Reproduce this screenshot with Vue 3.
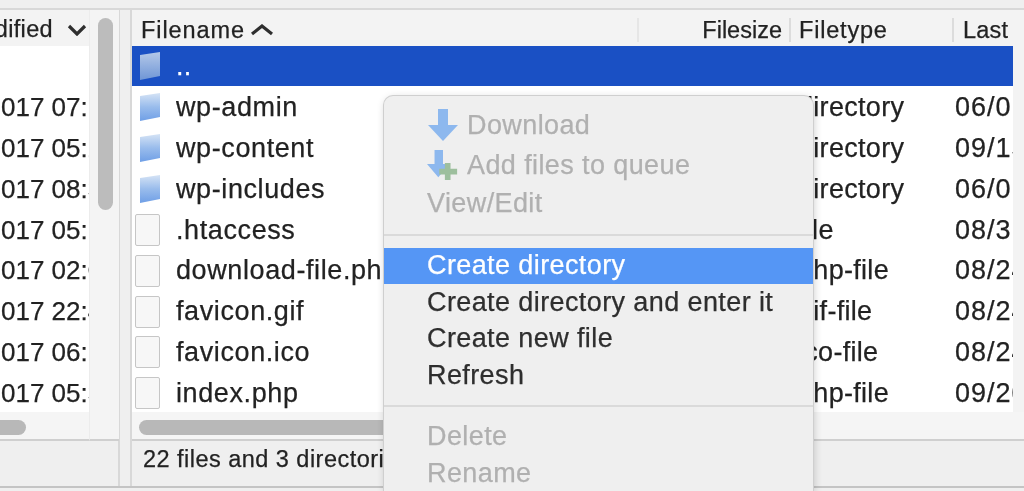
<script setup>
const leftRows = ['2017 07:14', '2017 05:22', '2017 08:31', '2017 05:10', '2017 02:09', '2017 22:41', '2017 06:18', '2017 05:33']
const rows = [
  { name: 'wp-admin', kind: 'dir', type: 'directory', date: '06/01/2017' },
  { name: 'wp-content', kind: 'dir', type: 'directory', date: '09/15/2017' },
  { name: 'wp-includes', kind: 'dir', type: 'directory', date: '06/01/2017' },
  { name: '.htaccess', kind: 'file', type: 'file', date: '08/31/2017' },
  { name: 'download-file.php', kind: 'file', type: 'php-file', date: '08/24/2017' },
  { name: 'favicon.gif', kind: 'file', type: 'gif-file', date: '08/24/2017' },
  { name: 'favicon.ico', kind: 'file', type: 'ico-file', date: '08/24/2017' },
  { name: 'index.php', kind: 'file', type: 'php-file', date: '09/20/2017' }
]
</script>

<template>
  <div class="app">
    <div class="top"></div>
    <div class="panes">
      <section class="pane left">
        <div class="left-top">
          <div class="left-main">
            <div class="head left-head">
              <span class="clip-head">Modified</span>
              <svg class="chev" width="20" height="12" viewBox="0 0 20 12"><path d="M2 2l8 8 8-8" fill="none" stroke="#2e2e2e" stroke-width="3.2"/></svg>
            </div>
            <div class="list">
              <div class="row first-row"></div>
              <div v-for="t in leftRows" :key="t" class="row left-row">{{ t }}</div>
            </div>
            <div class="hbar"><span class="thumb left-thumb"></span></div>
          </div>
          <div class="vtrack"><span class="vthumb"></span></div>
        </div>
        <div class="status"></div>
      </section>

      <section class="pane right">
        <div class="head right-head">
          <div class="hcell name-h">
            <span>Filename</span>
            <svg width="24" height="12" viewBox="0 0 24 12"><path d="M2 10l10-8 10 8" fill="none" stroke="#2e2e2e" stroke-width="3.2"/></svg>
          </div>
          <div class="hcell size-h">Filesize</div>
          <div class="hcell type-h">Filetype</div>
          <div class="hcell last-h">Last</div>
        </div>
        <div class="list">
          <div class="row file-row selected">
            <svg class="folder" width="26" height="32" viewBox="0 0 26 32">
              <defs>
                <linearGradient id="fs" x1="0" y1="0" x2="0" y2="1"><stop offset="0" stop-color="#b4c8e8"/><stop offset="1" stop-color="#6f96d6"/></linearGradient>
              </defs>
              <path d="M3 5l20-3v24l-20 4z" fill="url(#fs)"/>
            </svg>
            <span class="dots">..</span>
          </div>
          <div v-for="r in rows" :key="r.name" class="row file-row">
            <svg v-if="r.kind === 'dir'" class="folder" width="26" height="32" viewBox="0 0 26 32">
              <defs>
                <linearGradient id="fg" x1="0" y1="0" x2="0" y2="1"><stop offset="0" stop-color="#d5e3f5"/><stop offset="0.5" stop-color="#99bcec"/><stop offset="1" stop-color="#6f9fe6"/></linearGradient>
              </defs>
              <path d="M3 5l20-3v24l-20 4z" fill="url(#fg)"/>
            </svg>
            <span v-else class="doc"></span>
            <span class="name">{{ r.name }}</span>
            <span class="type">{{ r.type }}</span>
            <span class="date">{{ r.date }}</span>
          </div>
        </div>
        <div class="hbar"><span class="thumb right-thumb"></span></div>
        <div class="status"><span class="status-text">22 files and 3 directories</span></div>
      </section>
    </div>

    <div class="menu">
      <div class="item off with-icon">
        <svg width="32" height="34" viewBox="0 0 32 34"><path d="M11 1h10v16h10L16 33 1 17h10z" fill="#8db8ee"/></svg>
        <span>Download</span>
      </div>
      <div class="item off with-icon">
        <svg width="34" height="34" viewBox="0 0 34 34"><path d="M8 1h9v15h7L12 30 0 16h8z" fill="#8db8ee"/><path d="M19 15h6v6h7v6h-7v6h-6v-6h-6v-6h6z" fill="#9dbf9d"/></svg>
        <span>Add files to queue</span>
      </div>
      <div class="item off short">View/Edit</div>
      <div class="sep first-sep"></div>
      <div class="item hot">Create directory</div>
      <div class="item short">Create directory and enter it</div>
      <div class="item short">Create new file</div>
      <div class="item short">Refresh</div>
      <div class="sep second-sep"></div>
      <div class="item off short">Delete</div>
      <div class="item off short">Rename</div>
    </div>
  </div>
</template>

<style>
html, body { margin: 0; overflow: hidden; background: #efefef; }
</style>

<style scoped>
.app {
  position: relative;
  width: 1024px;
  height: 491px;
  overflow: hidden;
  display: flex;
  flex-direction: column;
  background: #efefef;
  color: #222;
  font-family: "Liberation Sans", Arial, sans-serif;
  -webkit-text-stroke: 0.25px currentColor;
  filter: blur(0.55px);
}
.top { height: 8px; border-bottom: 2px solid #d8d8d8; flex: none; }
.panes { display: flex; gap: 10px; height: 476px; border-bottom: 2px solid #c4c4c4; flex: none; }
.pane { display: flex; flex-direction: column; background: #f3f3f3; }
.left { width: 120px; border-right: 2px solid #d8d8d8; box-sizing: border-box; }
.right { flex: 1; border-left: 2px solid #d8d8d8; min-width: 0; }
.left-top { display: flex; flex: none; }
.left-main { width: 89px; display: flex; flex-direction: column; }
.vtrack { flex: 1; background: #f4f4f4; padding: 8px 6px 0 8px; border-left: 1px solid #ececec; border-bottom: 2px solid #cfcfcf; }
.vthumb { display: block; width: 15px; height: 192px; border-radius: 8px; background: #bcbcbc; }

.head { height: 36px; flex: none; font-size: 23.5px; display: flex; align-items: center; overflow: hidden; }
.left-head { justify-content: flex-end; padding: 3px 2px 0 0; box-sizing: border-box; gap: 14px; letter-spacing: 0.35px; }
.clip-head { white-space: nowrap; }
.chev { flex: none; }
.right-head { display: grid; grid-template-columns: 507px 152px 163px 1fr; }
.hcell { height: 24px; line-height: 24px; margin-top: 3px; box-sizing: border-box; border-right: 2px solid #dcdcdc; white-space: nowrap; }
.name-h { padding-left: 9px; display: flex; align-items: center; gap: 5px; border-right-color: #e6e6e6; letter-spacing: 0.9px; }
.size-h { text-align: right; padding-right: 7px; }
.type-h { padding-left: 8px; letter-spacing: 0.8px; }
.last-h { border: 0; padding-left: 9px; letter-spacing: 0.2px; }

.list { height: 366px; flex: none; background: #fff; overflow: hidden; }
.right .list { margin-right: 11px; }
.row { height: 40.85px; font-size: 27px; line-height: 40.85px; white-space: nowrap; }
.left-row { font-size: 26px; text-indent: -13.5px; overflow: hidden; }
.first-row { height: 41px; }
.file-row { display: grid; grid-template-columns: 44px 622px 157px 58px; align-items: center; letter-spacing: 0.3px; }
.file-row > span { overflow: hidden; }
.name { letter-spacing: 0.6px; }
.selected { height: 40px; margin-bottom: 1px; background: #1a50c4; color: #fff; }
.selected .dots { grid-column: 2; line-height: 50px; }
.folder { margin-left: 5px; }
.doc { width: 23px; height: 30px; margin-left: 3px; background: #f7f7f7; border: 1.5px solid #c6c6c6; border-radius: 2px; }
.date { letter-spacing: 1px; }

.hbar { height: 29px; flex: none; box-sizing: border-box; padding-top: 8px; border-bottom: 2px solid #cfcfcf; background: #f5f5f5; overflow: hidden; }
.thumb { display: block; height: 15px; border-radius: 8px; background: #b8b8b8; }
.left-thumb { width: 40px; margin-left: -14px; }
.right-thumb { width: 400px; margin-left: 7px; }
.status { flex: 1; font-size: 23.5px; letter-spacing: 0.47px; line-height: 36px; background: #efefef; }
.status-text { padding-left: 11px; white-space: nowrap; }

.menu {
  position: absolute;
  left: 384px;
  top: 96px;
  width: 429px;
  height: 395px;
  box-sizing: border-box;
  padding-top: 9px;
  background: #efefef;
  border-radius: 9px 9px 0 0;
  box-shadow: 0 0 0 1px #cfcfcf, 1px 2px 8px rgba(0, 0, 0, 0.2);
  font-size: 27px;
  letter-spacing: 0.4px;
  color: #2e2e2e;
}
.item { padding-left: 43px; height: 36.5px; line-height: 36.5px; white-space: nowrap; display: flex; align-items: center; }
.with-icon { height: 40px; gap: 8px; }
.with-icon svg { flex: none; width: 32px; height: 34px; }
.off, .with-icon span { color: #b0b0b0; }
.sep { height: 2px; background: #dadada; }
.first-sep { margin: 12px 0 12px; }
.second-sep { margin: 12px 0 11px; }
.hot { height: 36px; background: #5596f5; color: #fff; }
</style>
